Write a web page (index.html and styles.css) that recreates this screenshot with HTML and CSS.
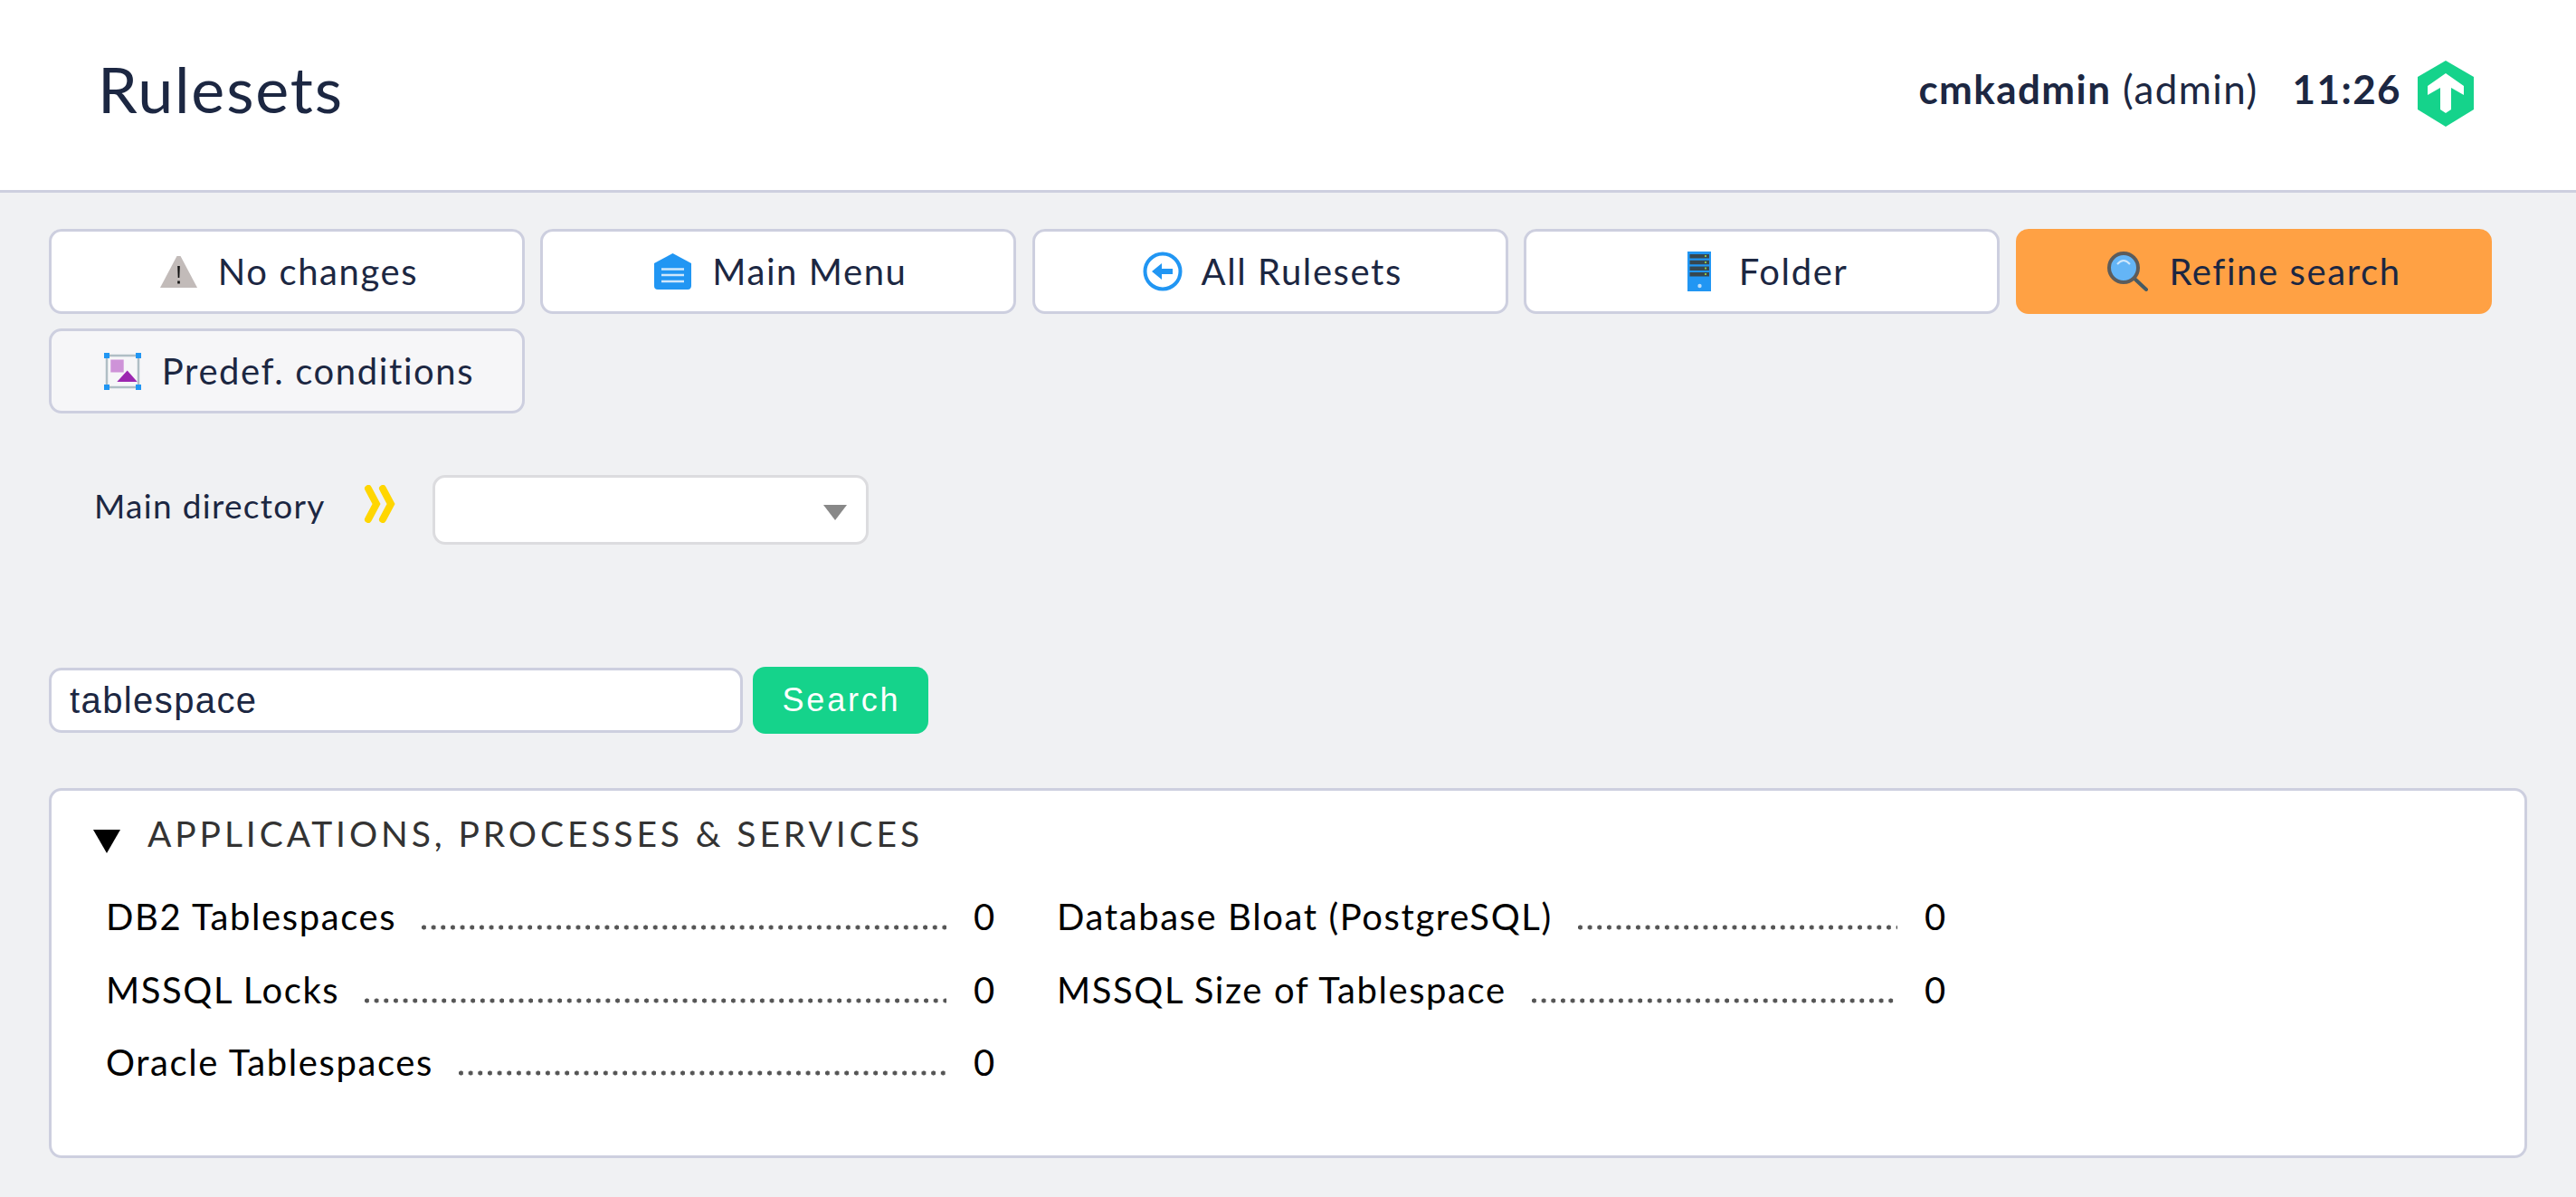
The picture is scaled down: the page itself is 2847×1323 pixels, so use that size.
FILE: index.html
```html
<!DOCTYPE html>
<html lang="en">
<head>
  <meta charset="UTF-8" />
  <title>Rulesets</title>
  <link rel="stylesheet" href="styles.css">
</head>
<body>
  <header class="top-bar">
    <h1>Rulesets</h1>
    <div class="status">
      <span class="user"><b>cmkadmin</b> (admin)</span>
      <b class="clock">11:26</b>
      <svg class="logo" width="62" height="73" viewBox="0 0 62 73">
        <path fill="#15d38b" d="M31 0 62 18V54L31 73 0 54V18Z"/>
        <path fill="#fff" d="M31 14 51 28V38L37 30V54L31 58 25 54V30L11 38V28Z"/>
      </svg>
    </div>
  </header>

  <main class="content">
    <nav class="actions">
      <a class="action">
        <svg width="41" height="35" viewBox="0 0 41 35">
          <path fill="#c2bbb9" d="M18.5 0h4L41 35H0Z"/>
          <path fill="#111" d="M19.2 11h2.6l-.5 13h-1.6zM19.2 27.500h2.600v3h-2.600z"/>
        </svg>
        No changes
      </a>
      <a class="action">
        <svg width="41" height="40" viewBox="0 0 41 40">
          <path fill="#2196f3" d="M20.500 0 41 11V36Q41 40 37 40H4Q0 40 0 36V11Z"/>
          <path stroke="#cfe7fb" stroke-width="2.500" d="M8 17.500H33M8 24H33M8 31H33"/>
        </svg>
        Main Menu
      </a>
      <a class="action back">
        <svg width="44" height="44" viewBox="0 0 44 44">
          <circle cx="22" cy="22" r="19.500" fill="none" stroke="#2196f3" stroke-width="4"/>
          <path fill="#2196f3" d="M10 22 21 13V19H33V25H21V31Z"/>
        </svg>
        All Rulesets
      </a>
      <a class="action folder">
        <svg width="26" height="44" viewBox="0 0 26 44">
          <path fill="#2196f3" d="M0 0H26V44H0Z"/>
          <path fill="#37474f" d="M2.500 3H24V7.500H2.500ZM2.500 9.700H24V14.200H2.500ZM2.500 16.400H24V20.900H2.500ZM2.500 23H24V27.500H2.500Z"/>
          <path fill="#8bc34a" d="M19 4h2v2h-2zM19 11h2v2h-2zM19 17.500h2v2h-2zM19 24h2v2h-2z"/>
          <circle cx="13.500" cy="38" r="2.200" fill="#bbdefb"/>
        </svg>
        Folder
      </a>
      <a class="action active">
        <svg width="45" height="44" viewBox="0 0 45 44">
          <path stroke="#455a64" stroke-width="4" stroke-linecap="round" d="M29 29 43 42"/>
          <circle cx="18" cy="18" r="16" fill="#64b5f6" stroke="#5c5c5c" stroke-width="4"/>
          <path fill="none" stroke="#cfe7fb" stroke-width="2" d="M11 14Q18 6 25 14"/>
        </svg>
        Refine search
      </a>
      <a class="action muted">
        <svg width="41" height="41" viewBox="0 0 41 41">
          <path fill="none" stroke="#b0bec5" stroke-width="2.500" d="M3 3H38V38H3Z"/>
          <path fill="#ce93d8" d="M7.300 7.500H21.700V21.500H7.300Z"/>
          <path fill="#9c27b0" d="M25.700 19.500 36.700 32H14.300Z"/>
          <path fill="#2196f3" d="M0 0H6V6H0ZM35 0H41V6H35ZM0 35H6V41H0ZM35 35H41V41H35Z"/>
        </svg>
        Predef. conditions
      </a>
    </nav>

    <div class="directory">
      <label>Main directory</label>
      <svg class="chevrons" width="38" height="42" viewBox="0 0 38 42">
        <path fill="none" stroke="#ffd600" stroke-width="8" stroke-linecap="round" d="M5 4 14 21 5 38M21 4 30 21 21 38"/>
      </svg>
      <div class="select"><span class="select-arrow"></span></div>
    </div>

    <form class="search">
      <input type="text" value="tablespace" />
      <button type="button">Search</button>
    </form>

    <section class="group">
      <h2><span class="caret"></span>APPLICATIONS, PROCESSES &amp; SERVICES</h2>
      <div class="rules">
        <a class="rule"><span class="name">DB2 Tablespaces</span><span class="dots"></span><span class="count">0</span></a>
        <a class="rule"><span class="name">Database Bloat (PostgreSQL)</span><span class="dots"></span><span class="count">0</span></a>
        <a class="rule"><span class="name">MSSQL Locks</span><span class="dots"></span><span class="count">0</span></a>
        <a class="rule"><span class="name">MSSQL Size of Tablespace</span><span class="dots"></span><span class="count">0</span></a>
        <a class="rule"><span class="name">Oracle Tablespaces</span><span class="dots"></span><span class="count">0</span></a>
      </div>
    </section>
  </main>
</body>
</html>
```
FILE: styles.css
```css
* {
  box-sizing: border-box;
}

html, body {
  height: 100%;
}

body {
  margin: 0;
  background-color: #f0f1f3;
  color: #1e262e;
  font-family: Lato, "Open Sans", sans-serif;
  overflow: hidden;
}

.top-bar {
  height: 213px;
  padding: 0 113px 14px 108px;
  background-color: #ffffff;
  border-bottom: 3px solid #cdcfdf;
  display: flex;
  align-items: center;
  justify-content: space-between;
  color: #1c2742;
}

h1 {
  margin: 0;
  font-size: 70px;
  font-weight: 400;
  letter-spacing: 1.8px;
}

.status {
  display: flex;
  align-items: center;
  font-size: 44px;
  letter-spacing: 1.4px;
}

.clock {
  margin-left: 38px;
}

.logo {
  margin-left: 18px;
  margin-top: 11px;
}

.content {
  padding: 40px 54px 0;
}

.actions {
  display: grid;
  grid-template-columns: repeat(5, 526px);
  gap: 16px 17.4px;
}

.action {
  height: 94px;
  padding-left: 5px;
  display: flex;
  align-items: center;
  justify-content: center;
  gap: 23px;
  background-color: #ffffff;
  border: 3px solid #cdcfdf;
  border-radius: 14px;
  color: #1c2742;
  font-size: 40px;
  letter-spacing: 1.6px;
}

.action.active {
  padding-left: 2px;
  background-color: #ffa144;
  border-color: #ffa144;
}

.action.muted {
  background-color: #f6f6f8;
}

.action.back {
  gap: 21px;
}

.action.folder svg {
  margin: 0 8px;
}

.directory {
  margin-top: 68px;
  padding-left: 50px;
  display: flex;
  align-items: center;
}

.directory label {
  margin-top: -10px;
  font-size: 37px;
  letter-spacing: 1.3px;
  color: #1c2742;
}

.chevrons {
  margin-left: 42px;
  margin-top: -13px;
}

.select {
  width: 482px;
  height: 77px;
  margin-left: 38px;
  background-color: #ffffff;
  border: 3px solid #dcdcdf;
  border-radius: 14px;
  display: flex;
  align-items: center;
  justify-content: flex-end;
  padding-right: 21px;
}

.select-arrow {
  width: 0;
  height: 0;
  margin-top: 6px;
  border-left: 13px solid transparent;
  border-right: 13px solid transparent;
  border-top: 17px solid #888888;
}

.search {
  margin: 135px 0 0;
  display: flex;
  align-items: center;
  gap: 11px;
}

.search input {
  width: 767px;
  height: 72px;
  padding: 0 20px;
  background-color: #ffffff;
  border: 3px solid #cdcfdf;
  border-radius: 14px;
  color: #1c2742;
  font-family: "Liberation Sans", Arial, sans-serif;
  font-size: 40px;
  letter-spacing: 1.4px;
}

.search button {
  width: 194px;
  height: 74px;
  padding-right: 4px;
  background-color: #15d38b;
  border: none;
  border-radius: 14px;
  color: #ffffff;
  font-family: "Liberation Sans", Arial, sans-serif;
  font-size: 36px;
  letter-spacing: 2.8px;
}

.group {
  height: 409px;
  margin-top: 60px;
  padding: 24px 50px 0 46px;
  background-color: #ffffff;
  border: 3px solid #cdcfdf;
  border-radius: 14px;
}

h2 {
  margin: 0;
  display: flex;
  align-items: center;
  font-size: 39px;
  font-weight: 400;
  letter-spacing: 3.9px;
  color: #333333;
}

.caret {
  width: 0;
  height: 0;
  margin: 18px 30px 0 0;
  border-left: 15px solid transparent;
  border-right: 15px solid transparent;
  border-top: 26px solid #000000;
}

.rules {
  margin-top: 29px;
  padding-left: 14px;
  display: grid;
  grid-template-columns: repeat(2, 981px);
  column-gap: 70px;
  grid-auto-rows: 80.5px;
}

.rule {
  display: flex;
  align-items: center;
  color: #000000;
  font-size: 40px;
  letter-spacing: 1.6px;
}

.name {
  margin-right: 28px;
}

.dots {
  flex: 1;
  height: 6px;
  margin-top: 24px;
  background-image: radial-gradient(circle at 2.5px 3px, #555 2.3px, transparent 2.8px);
  background-size: 10.67px 6px;
}

.count {
  margin-left: 30px;
  width: 22px;
}
```
